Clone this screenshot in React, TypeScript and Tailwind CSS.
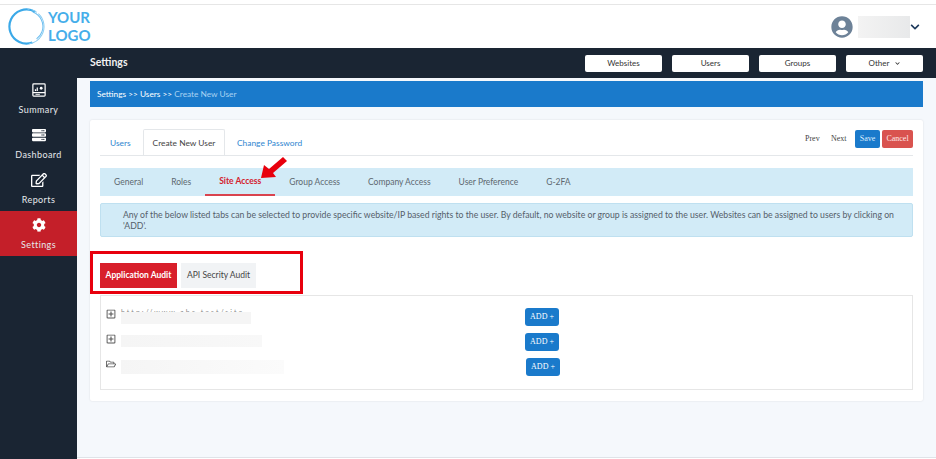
import { FaChevronDown, FaCog, FaRegEdit, FaRegFolderOpen, FaRegPlusSquare, FaServer, FaUserCircle } from "react-icons/fa";
import type { ReactNode } from "react";

const FONT = "font-['Lato','Noto_Sans',sans-serif]";
const SERIF = "font-['Liberation_Serif',serif]";

const TOP_BUTTONS = ["Websites", "Users", "Groups"];
const SUB_TABS = [
  { label: "General" },
  { label: "Roles" },
  { label: "Site Access", active: true },
  { label: "Group Access" },
  { label: "Company Access" },
  { label: "User Preference" },
  { label: "G-2FA" },
];

function SummaryIcon() {
  return (
    <svg viewBox="0 0 16 16" className="h-[14px] w-[14px]" fill="none" stroke="#fff" strokeWidth="1.4">
      <rect x="1" y="1" width="14" height="14" rx="1" />
      <path d="M1 11h14" />
      <path d="M4 9V7M6 9V5" />
      <circle cx="10.5" cy="6" r="1.6" fill="#fff" stroke="none" />
      <path d="M4 13h5" strokeWidth="1" />
    </svg>
  );
}

function LogoMark() {
  return (
    <svg viewBox="0 0 40 40" className="-ml-[1px] h-[39px] w-[39px]" fill="none">
      <circle cx="20" cy="20" r="17.5" stroke="#3ba9e8" strokeWidth="2.2" strokeDasharray="70 40" transform="rotate(70 20 20)" />
      <circle cx="20" cy="20" r="18" stroke="#8bcdf2" strokeWidth="1" strokeDasharray="2 2 40 60" transform="rotate(-60 20 20)" />
      <circle cx="21" cy="20" r="15.8" stroke="#6bbdef" strokeWidth="1" strokeDasharray="34 70" transform="rotate(-70 21 20)" />
    </svg>
  );
}

function NavItem({ icon, label, active }: { icon: ReactNode; label: string; active?: boolean }) {
  return (
    <div className={`flex h-[45px] flex-col items-center justify-center gap-[6px] ${active ? "bg-[#c41f29]" : ""}`}>
      <div className="flex h-[15px] items-center text-white">{icon}</div>
      <span className="text-[9px] leading-[11px] tracking-[0.4px] text-[#e6e9ec]">{label}</span>
    </div>
  );
}

function TreeRow({ icon, fade, left, addLeft, url }: { icon: ReactNode; fade: string; left: string; addLeft: string; url?: boolean }) {
  return (
    <div className="flex h-[25px] items-center">
      <div className="-mt-[6px] flex w-[20px] justify-center text-[#555]">{icon}</div>
      <div className={`relative ${left} ${fade}`}>
        {url && <span className="absolute -top-[5px] left-0 whitespace-nowrap text-[7px] leading-[8px] tracking-[2px] text-[#888]">http://www.abc.test/site</span>}
        {url && <div className="absolute inset-x-0 -top-[1px] bottom-0 bg-[#f5f5f5]" />}
      </div>
      <button className={`${addLeft} h-[18px] w-[34px] rounded-[3px] bg-[#1a7acb] text-[8px] text-white ${SERIF}`}>ADD +</button>
    </div>
  );
}

export default function App() {
  return (
    <div className={`flex h-[459px] w-[936px] flex-col overflow-hidden bg-white ${FONT}`}>
      <header className="mt-[4px] flex h-[44px] items-center justify-between border-t border-[#e6e6e6] pl-[8px] pr-[14px]">
        <div className="flex items-center gap-[2px]">
          <LogoMark />
          <div className="-mt-[2px] text-[15px] font-bold leading-[18px] text-[#45aeea]">
            <div>YOUR</div>
            <div>LOGO</div>
          </div>
        </div>
        <div className="flex items-center">
          <FaUserCircle className="text-[22px] text-[#6d8298]" />
          <div className="ml-[5px] h-[22px] w-[52px] bg-gradient-to-r from-[#f3f3f3] to-[#e8e9ea]" />
          <FaChevronDown className="mr-[2px] text-[10px] text-[#1d3a5c]" />
        </div>
      </header>

      <div className="flex min-h-0 flex-1">
        <aside className="w-[77px] shrink-0 bg-[#1a2533] pt-[28px]">
          <div className="flex flex-col">
            <NavItem icon={<SummaryIcon />} label="Summary" />
            <NavItem icon={<FaServer className="text-[14px]" />} label="Dashboard" />
            <NavItem icon={<FaRegEdit className="text-[16px]" />} label="Reports" />
            <NavItem icon={<FaCog className="text-[14px]" />} label="Settings" active />
          </div>
        </aside>

        <div className="flex min-w-0 flex-1 flex-col">
          <div className="flex h-[30px] items-center bg-[#1a2533] pl-[13px] pr-[13px]">
            <span className="text-[10.5px] font-bold text-[#f2f2f2]">Settings</span>
            <div className="ml-auto flex gap-[10px]">
              {TOP_BUTTONS.map((b) => (
                <button key={b} className="h-[17px] w-[77px] rounded-[2px] bg-white text-[8px] text-[#333]">{b}</button>
              ))}
              <button className="flex h-[17px] w-[77px] items-center justify-center gap-[6px] rounded-[2px] bg-white text-[8px] text-[#333]">
                Other <FaChevronDown className="text-[5px]" />
              </button>
            </div>
          </div>

          <main className="min-h-0 flex-1 border-b border-[#dfe3e8] bg-[#f5f8fc] pl-[13px] pr-[13px] pt-[3px]">
            <div className="flex h-[26px] items-center bg-[#1a7acb] pl-[7px] text-[8.3px] text-white">
              Settings &gt;&gt; Users &gt;&gt;&nbsp;<span className="text-[#a9d2f2]">Create New User</span>
            </div>

            <section className="relative mt-[13px] h-[281px] rounded-[2px] bg-white px-[10px] pt-[10px] shadow-[0_0_2px_rgba(0,0,0,0.12)]">
              <div className="flex h-[26px] items-end border-b border-[#e4e7ea] text-[8.4px]">
                <span className="ml-[10px] flex h-[25px] w-[33px] items-center pt-[1px] text-[#2f86d0]">Users</span>
                <span className="flex h-[26px] w-[82px] items-center justify-center rounded-t-[2px] border border-b-0 border-[#e4e7ea] bg-white pt-[1px] text-[#444]">Create New User</span>
                <span className="ml-[12px] flex h-[25px] items-center pt-[1px] text-[#2f86d0]">Change Password</span>
                <div className={`ml-auto flex h-[25px] items-start gap-[2px] text-[8px] ${SERIF}`}>
                  <span className="mt-[3px] w-[24px] text-[#444]">Prev</span>
                  <span className="mt-[3px] w-[22px] text-[#444]">Next</span>
                  <button className="h-[18px] w-[25px] rounded-[2px] bg-[#1a7acb] text-[#dff0ff]">Save</button>
                  <button className="h-[18px] w-[31px] rounded-[2px] bg-[#d9534f] text-[#ffe9e8]">Cancel</button>
                </div>
              </div>

              <div className="mt-[12px] flex h-[28px] items-stretch bg-[#d2ebf7] text-[8.5px] text-[#5d6870]">
                {SUB_TABS.map((t) => (
                  <div
                    key={t.label}
                    className={`flex items-center whitespace-nowrap px-[14px] ${t.active ? "border-b-2 border-[#d9434e] font-bold text-[#d4202c]" : ""}`}
                  >
                    {t.label}
                  </div>
                ))}
              </div>

              <div className="mt-[7px] h-[34px] rounded-[2px] border border-[#bfe0f0] bg-[#d2ebf7] pl-[22px] pr-[10px] pt-[5px] text-[8.7px] leading-[11px] text-[#55606a]">
                Any of the below listed tabs can be selected to provide specific website/IP based rights to the user. By default, no website or group is assigned to the user. Websites can be assigned to users by clicking on 'ADD'.
              </div>

              <div className="mt-[26px] flex gap-[4px] text-[8.5px]">
                <div className="flex h-[25px] w-[77px] items-center justify-center bg-[#d81f2a] font-bold text-white">Application Audit</div>
                <div className="flex h-[25px] w-[75px] items-center justify-center bg-[#f1f3f5] text-[#444]">API Secrity Audit</div>
              </div>

              <div className="mt-[7px] h-[95px] border border-[#e6e6e6] pt-[8px]">
                <TreeRow icon={<FaRegPlusSquare className="text-[10px]" />} left="mt-[4px] h-[11px] w-[130px]" fade="bg-[#f5f5f5]" addLeft="ml-[274px]" url />
                <TreeRow icon={<FaRegPlusSquare className="text-[10px]" />} left="-mt-[1px] h-[12px] w-[141px]" fade="bg-gradient-to-r from-[#f5f5f5] to-[#f8f8f8]" addLeft="ml-[263px]" />
                <TreeRow icon={<FaRegFolderOpen className="text-[10px]" />} left="h-[14px] w-[163px]" fade="bg-gradient-to-r from-[#f5f5f5] to-[#fbfbfb]" addLeft="ml-[242px]" />
              </div>

              <div className="pointer-events-none absolute left-0 top-[131px] h-[43px] w-[213px] border-[3px] border-[#e8000d]" />

              <svg viewBox="0 0 30 24" className="pointer-events-none absolute left-[169px] top-[35px] h-[24px] w-[30px]">
                <path d="M2 23 L5 10 L10 14 L24 2 L28 6 L14 18 L17 22 Z" fill="#e8000d" />
              </svg>
            </section>
          </main>
          <div className="h-[1px] bg-white" />
        </div>
      </div>
    </div>
  );
}
